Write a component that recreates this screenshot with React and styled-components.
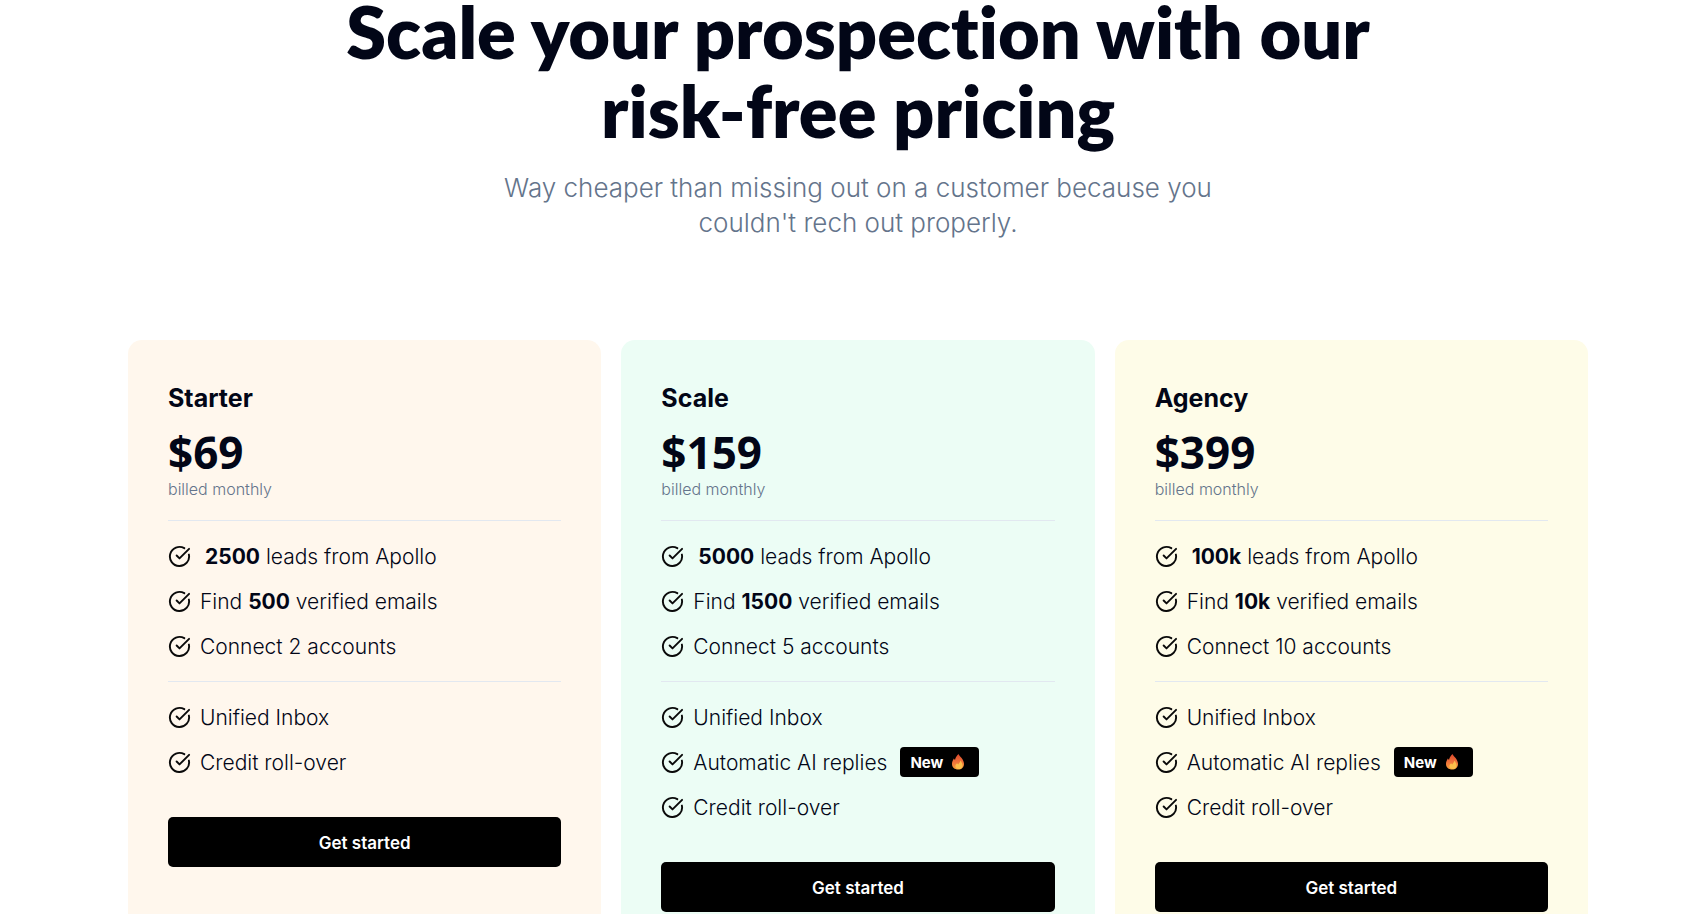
import React from 'react';
import styled, { createGlobalStyle } from 'styled-components';
import { CircleCheckBig } from 'lucide-react';

const GlobalStyle = createGlobalStyle`
	* {
		box-sizing: border-box;
	}
	html {
		scrollbar-width: none;
	}
	body {
		margin: 0;
		background: white;
		color: #020617;
		font-family: Inter, "Open Sans", sans-serif;
	}
`

const Page = styled.main`
	padding: 0 108px 40px 128px;
`

const Header = styled.header`
	margin: -8px 0 100px;
	text-align: center;
`

const Heading = styled.h1`
	margin: 0 0 20px;
	font-family: Lato, sans-serif;
	font-size: 72px;
	font-weight: 800;
	font-variant-ligatures: none;
	line-height: 79px;
`

const Subtitle = styled.p`
	margin: 0;
	color: #64748b;
	font-size: 26px;
	font-weight: 300;
	line-height: 35px;
`

const Plans = styled.section`
	display: grid;
	grid-template-columns: repeat(3, 1fr);
	gap: 20px;
`

const Card = styled.article`
	padding: 40px;
	border-radius: 14px;
	background: ${props => props.$color};
`

const PlanName = styled.h2`
	margin: 0;
	font-size: 25px;
	font-weight: 700;
	line-height: 36px;
`

const Price = styled.p`
	margin: 9px 0 0;
	font-family: "Noto Sans", sans-serif;
	font-size: 44px;
	font-weight: 700;
	line-height: 54px;
`

const Billing = styled.p`
	margin: 0;
	color: #64748b;
	font-size: 16px;
	font-weight: 300;
	line-height: 21px;
`

const Divider = styled.hr`
	margin: 20px 0;
	border: none;
	border-top: 1px solid #e2e8f0;
`

const Features = styled.ul`
	display: flex;
	flex-direction: column;
	gap: 15px;
	margin: 0;
	padding: 0;
	list-style: none;
`

const Feature = styled.li`
	display: flex;
	align-items: center;
	gap: 9px;
	height: 30px;
	font-size: 21px;
	font-weight: 300;

	svg {
		flex-shrink: 0;
	}
`

const Amount = styled.strong`
	margin-left: ${props => props.$lead ? '5px' : '0'};
	font-weight: 700;
`

const Badge = styled.span`
	display: flex;
	align-items: center;
	gap: 6px;
	height: 30px;
	margin-left: 4px;
	padding: 0 12px 0 10px;
	border-radius: 4px;
	background: black;
	color: white;
	font-size: 15px;
	font-weight: 700;
`

const StartButton = styled.button`
	width: 100%;
	height: 50px;
	margin-top: 40px;
	padding: 2px 0 0;
	border: none;
	border-radius: 5px;
	background: black;
	color: white;
	font-family: inherit;
	font-size: 17px;
	font-weight: 600;
`

const plans = [
	{ name: 'Starter', price: '$69', color: '#fff7ed', leads: '2500', emails: '500', accounts: 2, ai: false },
	{ name: 'Scale', price: '$159', color: '#ecfdf5', leads: '5000', emails: '1500', accounts: 5, ai: true },
	{ name: 'Agency', price: '$399', color: '#fefce8', leads: '100k', emails: '10k', accounts: 10, ai: true },
]

const Flame = () => (
	<svg width="18" height="18" viewBox="0 0 18 18" aria-hidden="true">
		<defs>
			<linearGradient id="flame" x1="0" y1="0" x2="0" y2="1">
				<stop offset="0" stopColor="#d9472b" />
				<stop offset="0.5" stopColor="#f0713a" />
				<stop offset="1" stopColor="#f9a13c" />
			</linearGradient>
		</defs>
		<path d="M9.5 1C10.500 3.500 15 6 15 11C15 14.500 12.500 16.500 9.200 16.500C5.600 16.500 3 14.300 3 11C3 8.600 4 7.200 4.800 5.600L6 7C6.400 4.600 7.800 2.600 9.500 1Z" fill="url(#flame)" />
		<path d="M12 7.500C12 9.500 13.600 10.300 13.600 12.400C13.600 14.800 11.800 16 9.800 16C7.800 16 6.400 14.800 6.400 13.200C6.400 11.800 7.300 11.200 8 10.300L9.200 11.500C10.300 10.500 10.800 8.800 12 7.500Z" fill="#fdc04b" />
	</svg>
)

const Item = ({ children }) => (
	<Feature>
		<CircleCheckBig size={23} color="#0a0a0a" aria-hidden="true" />
		{children}
	</Feature>
)

const Plan = ({ plan }) => (
	<Card $color={plan.color}>
		<PlanName>{plan.name}</PlanName>
		<Price>{plan.price}</Price>
		<Billing>billed monthly</Billing>
		<Divider />
		<Features>
			<Item><span><Amount $lead>{plan.leads}</Amount> leads from Apollo</span></Item>
			<Item><span>Find <Amount>{plan.emails}</Amount> verified emails</span></Item>
			<Item><span>Connect {plan.accounts} accounts</span></Item>
		</Features>
		<Divider />
		<Features>
			<Item><span>Unified Inbox</span></Item>
			{plan.ai && (
				<Item>
					<span>Automatic AI replies</span>
					<Badge>New <Flame /></Badge>
				</Item>
			)}
			<Item><span>Credit roll-over</span></Item>
		</Features>
		<StartButton type="button">Get started</StartButton>
	</Card>
)

export default function App() {
	return (
		<Page>
			<GlobalStyle />
			<Header>
				<Heading>Scale your prospection with our<br />risk-free pricing</Heading>
				<Subtitle>Way cheaper than missing out on a customer because you<br />couldn't rech out properly.</Subtitle>
			</Header>
			<Plans>
				{plans.map(plan => <Plan key={plan.name} plan={plan} />)}
			</Plans>
		</Page>
	)
}
